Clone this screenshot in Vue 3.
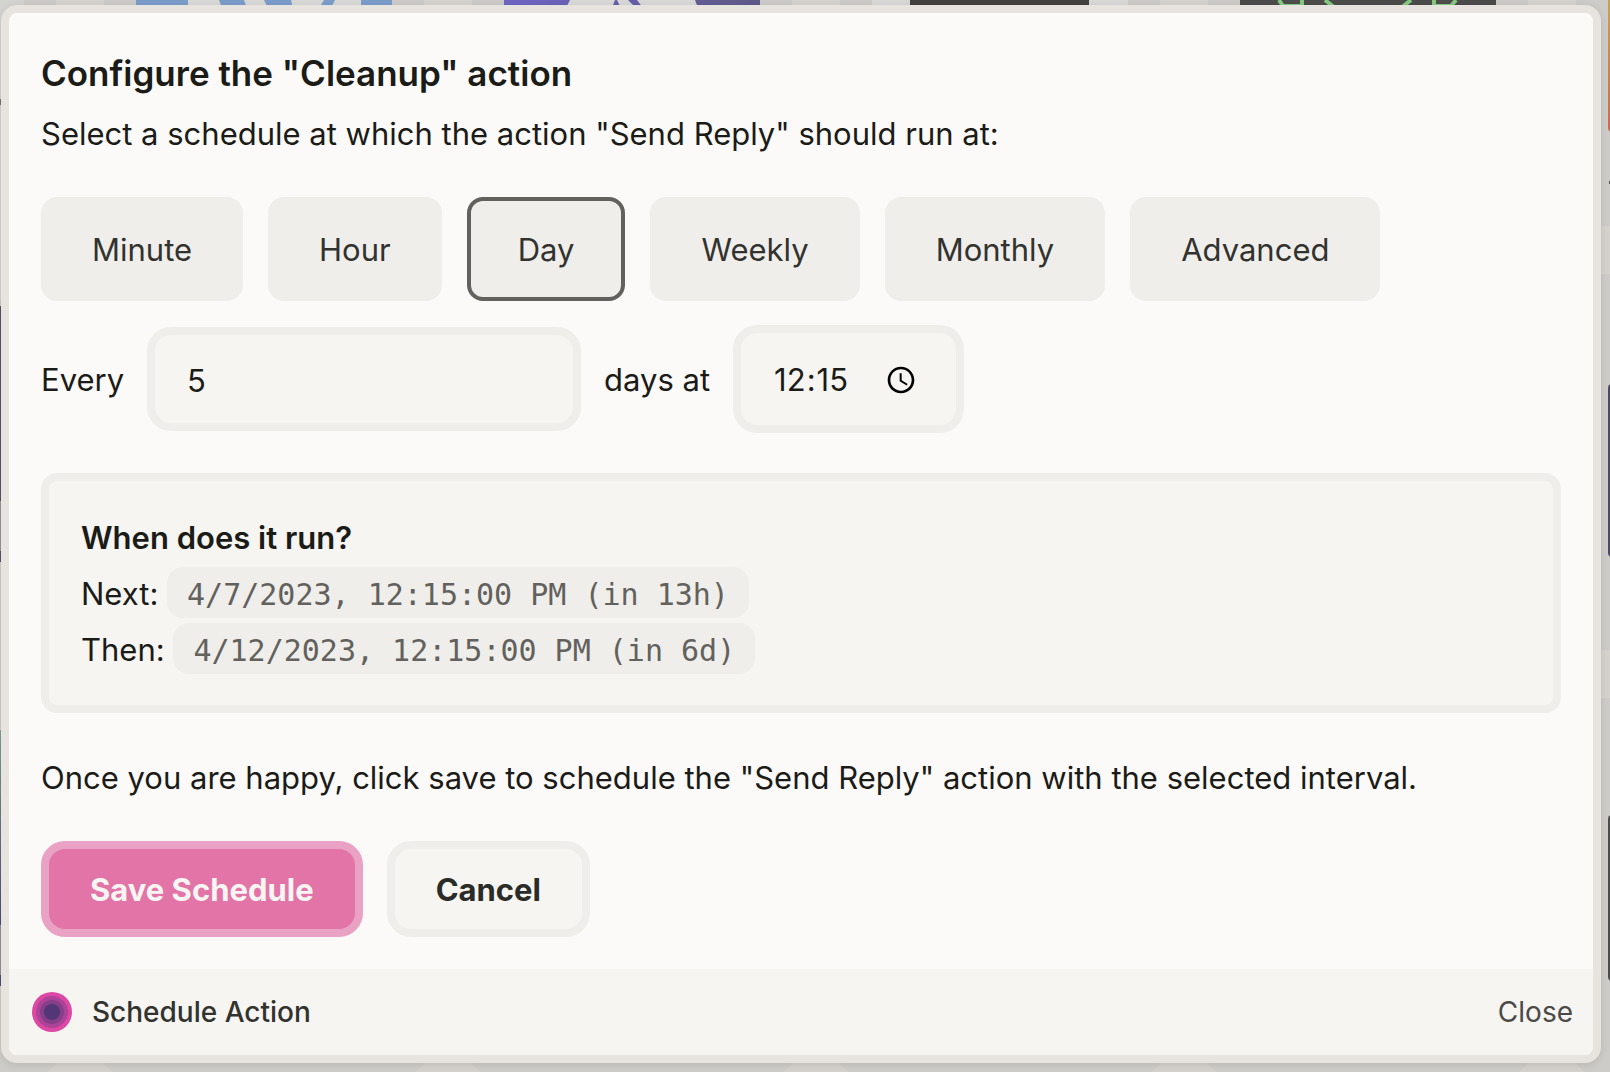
<script setup>
import { ref } from 'vue'

const intervals = ['Minute', 'Hour', 'Day', 'Weekly', 'Monthly', 'Advanced']
const selected = ref('Day')
const days = ref('5')
const time = ref('12:15')
const runs = [
  { label: 'Next:', value: '4/7/2023, 12:15:00 PM (in 13h)' },
  { label: 'Then:', value: '4/12/2023, 12:15:00 PM (in 6d)' },
]
const columns = [0, 368, 736, 1104, 1472]
</script>

<template>
  <div class="page">
    <svg class="backdrop" viewBox="0 0 1610 1072" preserveAspectRatio="xMinYMin slice" aria-hidden="true">
      <defs>
        <linearGradient id="violet"><stop offset="0" stop-color="#6f66c5" /><stop offset="1" stop-color="#5f5989" /></linearGradient>
        <linearGradient id="sunset" x2="0" y2="1"><stop offset="0" stop-color="#c9a355" /><stop offset="1" stop-color="#cb6a51" /></linearGradient>
        <linearGradient id="sea" x2="0" y2="1"><stop offset="0" stop-color="#7ca096" /><stop offset="1" stop-color="#4f4a78" /></linearGradient>
      </defs>
      <rect width="1610" height="1072" fill="#cdccc8" />
      <rect width="24" height="300" fill="#d3d3d2" />
      <g v-for="x in columns" :key="x" fill="#d5d2ce">
        <path :d="`M${x + 56} 0h48v1063l8 9h-64l8-9z`" />
      </g>
      <rect x="1600" y="226" width="10" height="48" fill="#d5d2ce" />
      <rect x="1600" y="650" width="10" height="48" fill="#d5d2ce" />
      <rect x="136" width="256" height="8" fill="#7b9dc9" />
      <path d="M188 0h31l3 8h-34zM244 0h20l4 8h-21zM291 0h33l-5 8h-26zM335 0h26v8h-30z" fill="#d8d8d7" />
      <rect x="504" width="256" height="8" fill="url(#violet)" />
      <path d="M570 0h45l-3 8h-46zM617 0h11l8 8h-15zM637 0h58l3 8h-55z" fill="#d8d8d7" />
      <rect x="872" width="256" height="8" fill="#d8d8d7" />
      <rect x="910" width="179" height="8" fill="#42413e" />
      <rect x="1240" width="256" height="8" fill="#4c4c4a" />
      <path d="M1279 0l4 6h19V0M1325 0l10 8M1411 0l-10 8M1434 0v6h17l5-6" fill="none" stroke="#85c980" stroke-width="4" />
      <rect x="1608" y="-6" width="8" height="138" rx="4" fill="url(#sunset)" />
      <rect x="1609" y="181" width="1" height="3" fill="#55534f" />
      <rect x="1608" y="384" width="8" height="173" rx="4" fill="#4d4963" />
      <rect x="1608" y="815" width="8" height="166" rx="4" fill="#4c4c4e" />
      <rect y="99" width="1" height="6" fill="#77716d" />
      <rect y="306" width="1" height="195" fill="#55526a" />
      <rect y="501" width="1" height="50" fill="#96949c" />
      <rect y="551" width="1" height="11" fill="#55526a" />
      <rect y="730" width="1" height="195" fill="url(#sea)" />
      <rect y="925" width="1" height="50" fill="#918da2" />
      <rect y="975" width="1" height="11" fill="#4f4a78" />
    </svg>

    <form class="modal" role="dialog" aria-labelledby="title" @submit.prevent>
      <div class="body">
        <h1 id="title">Configure the "Cleanup" action</h1>
        <p class="intro">Select a schedule at which the action "Send Reply" should run at:</p>

        <div class="intervals">
          <button
            v-for="name in intervals"
            :key="name"
            type="button"
            class="interval"
            :class="{ active: name === selected }"
            @click="selected = name"
          >{{ name }}</button>
        </div>

        <div class="fields">
          <label for="days">Every</label>
          <input id="days" v-model="days" class="field days" type="text" inputmode="numeric" />
          <label for="time">days at</label>
          <input id="time" v-model="time" class="field time" type="time" />
        </div>

        <section class="summary">
          <h2>When does it run?</h2>
          <p v-for="run in runs" :key="run.label">{{ run.label }} <code>{{ run.value }}</code></p>
        </section>

        <p class="outro">Once you are happy, click save to schedule the "Send Reply" action with the selected interval.</p>

        <div class="actions">
          <button type="submit" class="action primary">Save Schedule</button>
          <button type="button" class="action">Cancel</button>
        </div>
      </div>

      <footer class="footer">
        <svg class="logo" viewBox="0 0 40 40" aria-hidden="true">
          <circle cx="20" cy="20" r="20" fill="#de48a5" />
          <circle cx="20" cy="20" r="16" fill="#ad4398" />
          <circle cx="20" cy="20" r="12" fill="#853e8a" />
          <circle cx="20" cy="20" r="8" fill="#533675" />
        </svg>
        <span class="name">Schedule Action</span>
        <button type="button" class="close">Close</button>
      </footer>
    </form>
  </div>
</template>

<style>
body {
  margin: 0;
}
</style>

<style scoped>
.page {
  position: relative;
  box-sizing: border-box;
  min-height: 100vh;
  padding: 5px 9px 9px 1px;
  overflow: hidden;
  background: #cdccc8;
  color: #1b1b18;
  font: 400 31px/56px Inter, sans-serif;
}

.backdrop {
  position: absolute;
  inset: 0;
  width: 100%;
  height: 100%;
}

.modal {
  position: relative;
  border: 8px solid #e7e4df;
  border-radius: 16px;
  background: #fbfaf8;
  box-shadow: 0 2px 8px rgba(0, 0, 0, 0.1);
}

.body {
  padding: 32px;
}

h1,
h2,
p {
  margin: 0;
}

h1 {
  font-size: 35px;
  font-weight: 600;
  line-height: 56px;
}

.intro {
  margin-top: 5px;
}

.intervals {
  display: flex;
  flex-wrap: wrap;
  gap: 25px;
  margin-top: 35px;
}

button,
input {
  box-sizing: border-box;
  margin: 0;
  font: inherit;
  color: inherit;
}

.interval {
  height: 104px;
  padding: 2px 47px 0;
  border: 4px solid #efeeea;
  border-radius: 16px;
  background: #efeeea;
  color: #32322f;
}

.interval.active {
  border-color: #62615d;
}

.fields {
  display: flex;
  align-items: center;
  gap: 23px;
  margin-top: 24px;
}

.fields label {
  padding-top: 2px;
}

.field {
  height: 104px;
  padding: 2px 32px 0;
  border: 8px solid #efeeea;
  border-radius: 24px;
  background: #f6f5f1;
}

.days {
  width: 434px;
}

.time {
  width: 231px;
  height: 108px;
  padding-right: 36px;
}

.time::-webkit-datetime-edit-ampm-field {
  display: none;
}

.summary {
  margin-top: 40px;
  padding: 29px 32px 27px;
  border: 8px solid #efeeea;
  border-radius: 16px;
  background: #f6f5f1;
}

h2 {
  font-size: 31px;
  font-weight: 600;
}

code {
  padding: 10px 20px 6px;
  border-radius: 16px;
  background: #efeeea;
  color: #62615d;
  font: 400 30px/36px "DejaVu Sans Mono", monospace;
}

.outro {
  margin-top: 37px;
}

.actions {
  display: flex;
  gap: 24px;
  margin-top: 35px;
}

.action {
  height: 96px;
  padding: 2px 41px 0;
  border: 8px solid #efeeea;
  border-radius: 24px;
  background: #f6f5f1;
  color: #2b2b28;
  font-weight: 700;
}

.primary {
  border-color: #e9a2c3;
  background: #e274a7;
  color: #f9f5f2;
}

.footer {
  display: flex;
  align-items: center;
  gap: 20px;
  height: 86px;
  padding: 0 20px 0 23px;
  border-radius: 0 0 8px 8px;
  background: #f6f5f1;
  color: #32322f;
  font-size: 28px;
}

.logo {
  width: 40px;
  height: 40px;
}

.name {
  flex: 1;
  font-weight: 500;
}

.close {
  padding: 0;
  border: 0;
  background: none;
  color: #4b4a47;
}
</style>
